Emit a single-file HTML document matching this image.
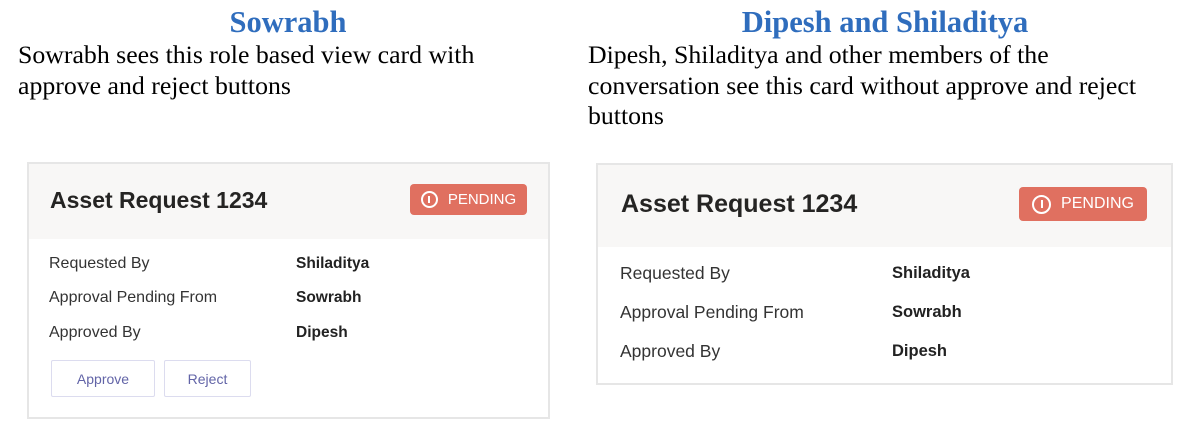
<!DOCTYPE html>
<html><head><style>
body{margin:0;width:1200px;height:444px;background:#fff;position:relative;overflow:hidden;font-family:"Liberation Sans",sans-serif}
.a{position:absolute}
.h{font-family:"Liberation Serif",serif;font-weight:bold;color:#2f6dbd;font-size:30.5px;line-height:32px;white-space:nowrap;text-align:center;width:600px}
.t{font-family:"Liberation Serif",serif;font-size:25.8px;line-height:30.5px;color:#000;white-space:nowrap}
.card{position:absolute;border:2px solid #e6e6e6;background:#fff;box-sizing:border-box}
.hd{position:absolute;left:0;right:0;top:0;background:#f8f7f6}
.title{position:absolute;font-weight:bold;color:#252423;white-space:nowrap}
.pill{position:absolute;background:#e07060;border-radius:4px;color:#fff;display:flex;align-items:center;justify-content:center;gap:10px}
.ic{border:2px solid #fff;border-radius:50%;position:relative;box-sizing:border-box}
.ic:after{content:"";position:absolute;left:50%;top:22%;width:2px;height:56%;margin-left:-1px;background:#fff}
.l{position:absolute;color:#333;white-space:nowrap}
.v{position:absolute;font-weight:bold;color:#222;white-space:nowrap}
.btn{position:absolute;border:1px solid #dcdcef;border-radius:2px;color:#6264a7;font-size:14px;display:flex;align-items:center;justify-content:center;box-sizing:border-box}
</style></head><body>
<div class="a h" style="left:-12px;top:6px">Sowrabh</div>
<div class="a t" style="left:18px;top:40px">Sowrabh sees this role based view card with<br>approve and reject buttons</div>
<div class="a h" style="left:585px;top:6px">Dipesh and Shiladitya</div>
<div class="a t" style="left:588px;top:40px">Dipesh, Shiladitya and other members of the<br>conversation see this card without approve and reject<br>buttons</div>

<div class="card" style="left:27px;top:162px;width:523px;height:257px">
 <div class="hd" style="height:75px"></div>
 <div class="title" style="left:21px;top:23px;font-size:23px">Asset Request 1234</div>
 <div class="pill" style="left:381px;top:20px;width:117px;height:31px;font-size:15px"><div class="ic" style="width:17px;height:17px"></div>PENDING</div>
 <div class="l" style="left:20px;top:91px;font-size:16px">Requested By</div>
 <div class="v" style="left:267px;top:91px;font-size:15.5px">Shiladitya</div>
 <div class="l" style="left:20px;top:125px;font-size:16px">Approval Pending From</div>
 <div class="v" style="left:267px;top:125px;font-size:15.5px">Sowrabh</div>
 <div class="l" style="left:20px;top:160px;font-size:16px">Approved By</div>
 <div class="v" style="left:267px;top:160px;font-size:15.5px">Dipesh</div>
 <div class="btn" style="left:22px;top:196px;width:104px;height:37px">Approve</div>
 <div class="btn" style="left:135px;top:196px;width:87px;height:37px">Reject</div>
</div>

<div class="card" style="left:596px;top:163px;width:577px;height:222px">
 <div class="hd" style="height:82px"></div>
 <div class="title" style="left:23px;top:25px;font-size:25px">Asset Request 1234</div>
 <div class="pill" style="left:421px;top:22px;width:128px;height:34px;font-size:16px"><div class="ic" style="width:19px;height:19px"></div>PENDING</div>
 <div class="l" style="left:22px;top:98px;font-size:17.5px">Requested By</div>
 <div class="v" style="left:294px;top:99px;font-size:16.5px">Shiladitya</div>
 <div class="l" style="left:22px;top:137px;font-size:17.5px">Approval Pending From</div>
 <div class="v" style="left:294px;top:138px;font-size:16.5px">Sowrabh</div>
 <div class="l" style="left:22px;top:176px;font-size:17.5px">Approved By</div>
 <div class="v" style="left:294px;top:177px;font-size:16.5px">Dipesh</div>
</div>
</body></html>
